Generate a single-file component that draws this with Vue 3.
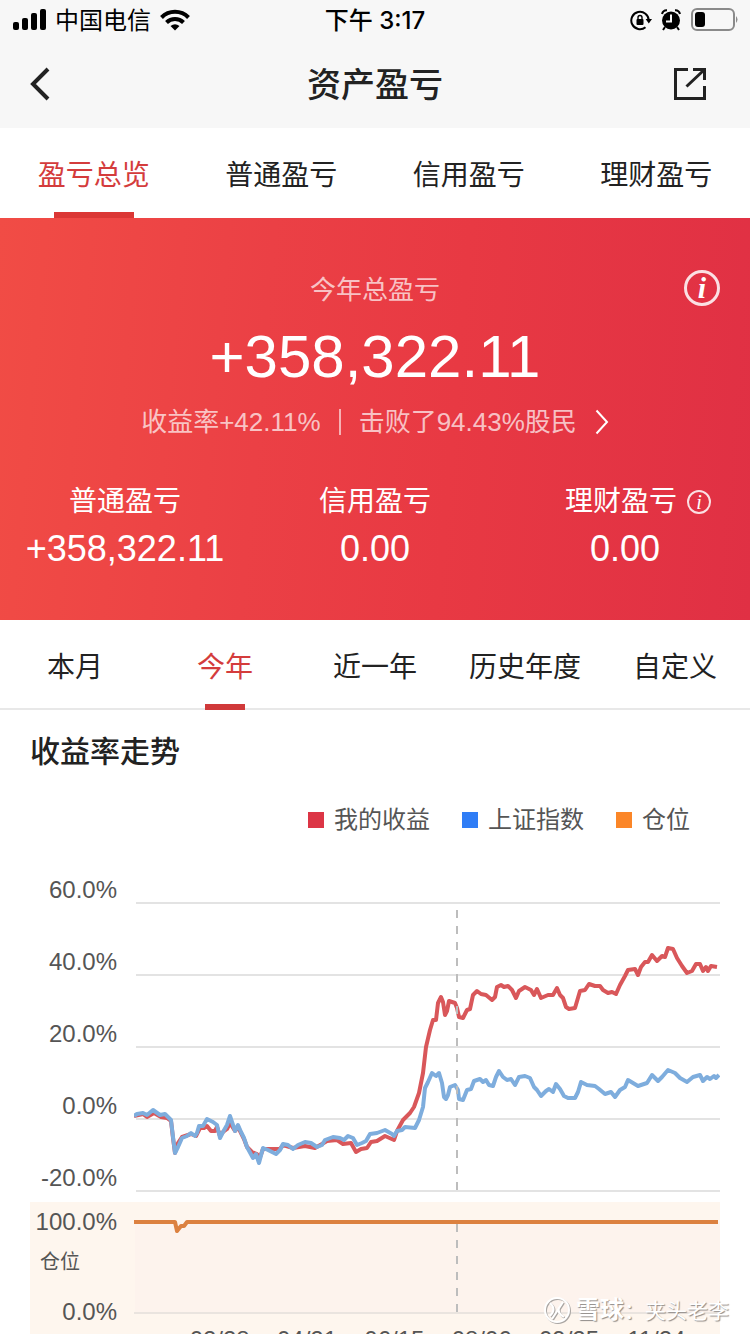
<script setup>
import { ref } from 'vue';

const tabs = ['盈亏总览', '普通盈亏', '信用盈亏', '理财盈亏'];
const activeTab = ref('盈亏总览');

const periods = ['本月', '今年', '近一年', '历史年度', '自定义'];
const activePeriod = ref('今年');

const metrics = [
    { label: '普通盈亏', value: '+358,322.11' },
    { label: '信用盈亏', value: '0.00' },
    { label: '理财盈亏', value: '0.00', info: true },
];

const legend = [
    { name: '我的收益', key: 'mine' },
    { name: '上证指数', key: 'index' },
    { name: '仓位', key: 'position' },
];

const yLabels = ['60.0%', '40.0%', '20.0%', '0.0%', '-20.0%'];
const gridLines = [25, 97, 169, 241, 313];
const dates = ['02/28', '04/21', '06/15', '08/06', '09/25', '11/24'];

const mine = '0,238 9,236 13,239 20,235 27,239 33,240 37,243 39,260 41,275 44,265 48,259 57,256 62,258 66,250 70,250 73,248 77,253 81,253 83,249 86,258 89,254 93,251 96,245 101,253 104,249 107,255 110,261 113,269 118,274 123,276 125,282 129,271 139,271 146,271 149,267 159,270 171,268 181,270 188,266 193,263 203,262 209,266 217,265 222,274 227,271 233,270 237,264 243,263 251,258 260,262 263,253 269,242 276,235 280,229 285,215 289,195 292,169 296,152 299,142 302,142 304,125 307,119 309,124 311,137 313,133 315,123 321,125 323,130 325,139 329,140 333,132 336,131 339,117 343,113 347,116 352,117 358,122 361,119 363,109 367,107 370,109 374,108 378,112 382,120 385,113 391,109 397,112 400,117 403,111 407,120 414,117 419,117 423,110 426,117 429,120 432,129 435,131 441,130 446,113 451,112 455,106 461,108 466,108 469,112 474,115 478,114 482,116 486,107 491,98 494,92 501,91 504,97 507,89 511,84 514,84 518,77 523,83 528,78 531,79 534,70 539,71 543,80 548,88 553,95 558,93 562,86 566,86 569,93 572,89 574,93 577,88 583,89';

const index = '0,238 3,236 9,235 13,237 19,232 26,237 31,236 34,239 37,242 39,259 41,275 44,269 48,260 53,258 57,255 61,258 63,255 65,248 69,248 73,241 79,244 83,247 86,260 89,254 93,247 96,238 101,253 104,247 107,254 110,260 113,269 119,280 122,276 125,285 129,270 134,272 142,276 146,272 149,266 154,267 159,271 164,267 171,264 177,265 183,269 188,267 191,262 199,259 206,260 210,262 214,258 219,260 223,267 228,265 232,263 236,256 243,255 251,252 258,256 260,258 263,253 268,252 271,249 281,250 285,242 289,229 291,210 294,204 298,195 302,198 305,195 308,205 310,219 312,221 314,217 316,209 321,207 324,212 325,221 329,222 333,212 337,211 340,203 346,201 349,204 352,202 355,207 359,208 362,199 365,193 369,199 373,202 377,201 381,207 385,199 391,198 396,200 400,209 403,212 407,218 412,213 415,211 419,214 422,206 426,211 430,218 434,220 441,220 444,214 447,204 453,207 461,208 465,211 471,216 477,214 481,219 486,212 491,209 494,202 499,205 504,208 513,205 518,197 524,203 528,199 534,192 541,195 546,200 553,204 559,199 566,197 569,203 573,199 576,201 580,198 582,200 585,197';

const position = '0,20 41,20 43,29 47,24 50,24 53,20 584,20';
</script>

<template>
    <div class="page">
        <header class="top">
            <div class="status">
                <div class="status-left">
                    <svg width="34" height="22" viewBox="0 0 34 22">
                        <rect x="1" y="13" width="6" height="8" rx="2" />
                        <rect x="10" y="9" width="6" height="12" rx="2" />
                        <rect x="19" y="4" width="6" height="17" rx="2" />
                        <rect x="28" y="0" width="6" height="21" rx="2" />
                    </svg>
                    <span class="carrier">中国电信</span>
                    <svg width="30" height="22" viewBox="0 0 30 22">
                        <path d="M1.500 8.500 A19 19 0 0 1 28.500 8.500" fill="none" stroke="#000" stroke-width="4" />
                        <path d="M6.500 13.500 A12 12 0 0 1 23.500 13.500" fill="none" stroke="#000" stroke-width="4" />
                        <path d="M10.500 17 Q15 13.500 19.500 17 L15 21.500 Z" />
                    </svg>
                </div>
                <div class="time">下午 3:17</div>
                <div class="status-right">
                    <svg width="22" height="22" viewBox="0 0 22 22">
                        <path d="M15.500 18.200 A8.700 8.700 0 1 1 18.700 11.500" fill="none" stroke="#000" stroke-width="2" />
                        <path d="M15.600 10 H22 L18.800 14.500 Z" />
                        <rect x="6.500" y="10" width="7" height="6" rx="1" />
                        <path d="M8 10.500 V8.500 A2 2 0 0 1 12 8.500 V10.500" fill="none" stroke="#000" stroke-width="1.400" />
                    </svg>
                    <svg width="20" height="22" viewBox="0 0 20 22">
                        <circle cx="10" cy="11.500" r="9" />
                        <path d="M1 5 Q2 1 6 1.200 M19 5 Q18 1 14 1.200" fill="none" stroke="#000" stroke-width="2" />
                        <path d="M4 18 L2 21 M16 18 L18 21" stroke="#000" stroke-width="2" />
                        <path d="M10 5.500 V12.500 H5" fill="none" stroke="#f7f7f7" stroke-width="2" />
                    </svg>
                    <svg width="48" height="24" viewBox="0 0 48 24">
                        <rect x="2" y="1" width="42" height="21" rx="5" fill="none" stroke="#8a8a8a" stroke-width="2" />
                        <rect x="5" y="4" width="10" height="15" rx="3" />
                        <path d="M46 8 Q49 11.500 46 15 Z" fill="#8a8a8a" />
                    </svg>
                </div>
            </div>
            <div class="nav">
                <button class="icon-btn" aria-label="返回">
                    <svg width="20" height="34" viewBox="0 0 20 34">
                        <path d="M18 2 L3 17 L18 32" fill="none" stroke="#222" stroke-width="4" />
                    </svg>
                </button>
                <h1>资产盈亏</h1>
                <button class="icon-btn share" aria-label="分享">
                    <svg width="34" height="34" viewBox="0 0 34 34">
                        <path d="M15 2.500 H2.500 V31.500 H31.500 V19" fill="none" stroke="#222" stroke-width="3" />
                        <path d="M20 2.500 H31.500 V13 M31 3 L13.500 19.500" fill="none" stroke="#222" stroke-width="3" />
                    </svg>
                </button>
            </div>
        </header>

        <nav class="tabs">
            <button
                v-for="tab in tabs"
                :key="tab"
                class="tab"
                :class="{ active: tab === activeTab }"
                @click="activeTab = tab"
            >
                <span>{{ tab }}</span>
            </button>
        </nav>

        <section class="banner">
            <div class="banner-head">
                <span class="banner-label">今年总盈亏</span>
                <button class="info big" aria-label="说明">i</button>
            </div>
            <div class="total">+358,322.11</div>
            <a class="rate" href="#">
                <span>收益率+42.11%</span>
                <i class="bar"></i>
                <span>击败了94.43%股民</span>
                <svg width="14" height="26" viewBox="0 0 14 26">
                    <path d="M1.500 1.500 L12 13 L1.500 24.500" fill="none" stroke="#fff" stroke-width="2" />
                </svg>
            </a>
            <div class="metrics">
                <div v-for="m in metrics" :key="m.label" class="metric">
                    <div class="metric-label" :class="{ 'has-info': m.info }">
                        <span>{{ m.label }}</span>
                        <button v-if="m.info" class="info" aria-label="理财盈亏说明">i</button>
                    </div>
                    <div class="metric-value">{{ m.value }}</div>
                </div>
            </div>
        </section>

        <nav class="tabs periods">
            <button
                v-for="p in periods"
                :key="p"
                class="tab"
                :class="{ active: p === activePeriod }"
                @click="activePeriod = p"
            >
                <span>{{ p }}</span>
            </button>
        </nav>

        <section class="trend">
            <h2>收益率走势</h2>
            <div class="legend">
                <div v-for="item in legend" :key="item.key" class="legend-item">
                    <i :class="item.key"></i>
                    <span>{{ item.name }}</span>
                </div>
            </div>

            <div class="chart">
                <div class="y-axis">
                    <span v-for="y in yLabels" :key="y">{{ y }}</span>
                </div>
                <svg class="plot" viewBox="0 0 586 324" preserveAspectRatio="none">
                    <line v-for="y in gridLines" :key="y" class="grid" x1="2" x2="586" :y1="y" :y2="y" />
                    <polyline class="line red" :points="mine" />
                    <polyline class="line blue" :points="index" />
                    <line class="cursor" x1="323" x2="323" y1="32" y2="312" />
                </svg>
            </div>

            <div class="position-chart">
                <div class="position-axis">
                    <span>100.0%</span>
                    <span class="position-name">仓位</span>
                    <span>0.0%</span>
                </div>
                <div class="position-body">
                    <svg class="position-plot" viewBox="0 0 586 120" preserveAspectRatio="none">
                        <rect x="1" y="20" width="585" height="91" fill="#fdf3ed" />
                        <line class="grid" x1="0" x2="586" y1="111" y2="111" />
                        <line class="cursor" x1="323" x2="323" y1="22" y2="111" />
                        <polyline class="line orange" :points="position" />
                    </svg>
                    <div class="dates">
                        <span v-for="d in dates" :key="d">{{ d }}</span>
                    </div>
                </div>
            </div>
        </section>

        <div class="watermark">
            <svg width="28" height="28" viewBox="0 0 28 28">
                <g fill="none" stroke="#a9a5a2" stroke-width="2" transform="translate(1 1)">
                    <circle cx="13" cy="13" r="12" />
                    <path d="M6 6 Q13 12 6 19 M19 5 L8 22 M20 20 Q13 16 15 11" />
                </g>
                <g fill="none" stroke="#fff" stroke-width="2">
                    <circle cx="13" cy="13" r="12" />
                    <path d="M6 6 Q13 12 6 19 M19 5 L8 22 M20 20 Q13 16 15 11" />
                </g>
            </svg>
            <span><b>雪球</b>：夹头老李</span>
        </div>
    </div>
</template>

<style>
body {
    margin: 0;
    background: #fff;
}
</style>

<style scoped>
.page {
    position: relative;
    height: 100vh;
    overflow: hidden;
    background: #fff;
    color: #222;
    font-family: "Liberation Sans", "Noto Sans CJK SC", sans-serif;
}

button {
    padding: 0;
    border: none;
    background: none;
    color: inherit;
    font: inherit;
    cursor: pointer;
}

svg {
    display: block;
    flex-shrink: 0;
}

.top {
    background: #f7f7f7;
}

.status {
    display: grid;
    grid-template-columns: 1fr auto 1fr;
    align-items: center;
    height: 40px;
    padding: 0 12px;
    color: #000;
    font-size: 24px;
}

.status-left,
.status-right {
    display: flex;
    align-items: center;
    gap: 9px;
}

.status-right {
    justify-content: flex-end;
}

.carrier,
.time {
    padding-bottom: 3px;
}

.time {
    font-family: Inter, "Noto Sans CJK SC", sans-serif;
    font-weight: 500;
}

.nav {
    display: grid;
    grid-template-columns: 1fr auto 1fr;
    align-items: center;
    height: 88px;
    padding: 0 43px 0 30px;
}

.icon-btn {
    justify-self: start;
}

.icon-btn.share {
    justify-self: end;
}

.nav h1 {
    margin: 0 0 0 13px;
    padding-bottom: 4px;
    font-size: 34px;
    font-weight: 500;
}

.tabs {
    display: flex;
    height: 90px;
}

.tab {
    display: flex;
    flex: 1;
    flex-direction: column;
    align-items: center;
    font-size: 28px;
}

.tab span {
    padding-top: 12px;
    line-height: 72px;
}

.tab.active {
    color: #d43c3c;
}

.tab.active::after {
    content: "";
    width: 80px;
    height: 6px;
    background: #db3735;
}

.periods {
    box-shadow: inset 0 -2px #e8e8e8;
}

.periods .tab.active::after {
    width: 40px;
    background: #d0393a;
}

.banner {
    height: 402px;
    background: linear-gradient(95deg, #f14c45 0%, #eb4045 35%, #e83943 60%, #e03044 100%);
    color: #fff;
}

.banner-head {
    display: grid;
    grid-template-columns: 1fr auto 1fr;
    align-items: center;
    padding: 51px 30px 0;
    height: 36px;
}

.banner-label {
    grid-column: 2;
    color: rgba(255, 255, 255, 0.7);
    font-size: 26px;
}

.info {
    width: 24px;
    height: 24px;
    box-sizing: border-box;
    border: 2px solid rgba(255, 255, 255, 0.85);
    border-radius: 50%;
    color: #fff;
    font: italic 20px/19px "Liberation Serif", serif;
    text-align: center;
}

.info.big {
    justify-self: end;
    width: 36px;
    height: 36px;
    border-width: 3px;
    font-size: 30px;
    font-weight: bold;
    line-height: 28px;
}

.total {
    margin-top: 20px;
    font-size: 60px;
    line-height: 64px;
    text-align: center;
}

.rate {
    display: flex;
    justify-content: center;
    align-items: center;
    gap: 18px;
    margin-top: 17px;
    color: rgba(255, 255, 255, 0.7);
    font-size: 26px;
    line-height: 32px;
    text-decoration: none;
}

.bar {
    width: 2px;
    height: 26px;
    background: rgba(255, 255, 255, 0.6);
}

.metrics {
    display: flex;
    margin-top: 44px;
}

.metric {
    flex: 1;
    text-align: center;
}

.metric-label {
    display: flex;
    justify-content: center;
    align-items: center;
    gap: 10px;
    font-size: 28px;
    line-height: 40px;
}

.metric-label.has-info {
    padding-left: 26px;
}

.metric-value {
    margin-top: 5px;
    font-size: 36px;
    line-height: 44px;
}

.trend h2 {
    margin: 21px 30px 0;
    font-size: 30px;
    font-weight: 500;
    line-height: 42px;
}

.legend {
    display: flex;
    justify-content: flex-end;
    gap: 32px;
    margin: 31px 60px 0 0;
    color: #555;
    font-size: 24px;
    line-height: 32px;
}

.legend-item {
    display: flex;
    align-items: center;
    gap: 10px;
}

.legend-item i {
    width: 16px;
    height: 16px;
}

.legend-item .mine {
    background: #dc3545;
}

.legend-item .index {
    background: #2f7df6;
}

.legend-item .position {
    background: #fb8628;
}

.chart {
    display: flex;
    gap: 17px;
    margin: 42px 30px 0 0;
}

.y-axis {
    display: flex;
    flex-direction: column;
    gap: 48px;
    width: 117px;
    color: #555;
    font-size: 24px;
    line-height: 24px;
    text-align: right;
}

.plot {
    flex: 1;
    width: 0;
    height: 324px;
}

.grid {
    stroke: #e3e3e3;
    stroke-width: 2;
}

.cursor {
    stroke: #bdbdbd;
    stroke-width: 2;
    stroke-dasharray: 8 8;
}

.line {
    fill: none;
    stroke-width: 4;
    stroke-linejoin: round;
    vector-effect: non-scaling-stroke;
}

.red {
    stroke: #d9575a;
}

.blue {
    stroke: #7eaddd;
}

.orange {
    stroke: #dc8140;
}

.position-chart {
    display: flex;
    gap: 17px;
    margin: 0 30px;
    background: #fef6ee;
}

.position-axis {
    display: flex;
    flex-direction: column;
    width: 87px;
    padding-top: 8px;
    color: #555;
    font-size: 24px;
    line-height: 24px;
    text-align: right;
}

.position-axis .position-name {
    margin: 16px 0 26px;
    padding-left: 10px;
    font-size: 20px;
    text-align: left;
}

.position-body {
    flex: 1;
}

.position-plot {
    width: 100%;
    height: 120px;
}

.position-plot .grid {
    stroke: #eae4df;
}

.dates {
    display: grid;
    grid-template-columns: repeat(6, 1fr);
    padding: 6px 20px 0 42px;
    color: #555;
    font-size: 24px;
    line-height: 24px;
    text-align: center;
}

.watermark {
    position: absolute;
    right: 21px;
    bottom: 8px;
    display: flex;
    align-items: center;
    gap: 4px;
    color: #fff;
    font-size: 21px;
    line-height: 30px;
    text-shadow: 1px 1px 1px #8f8b88;
}

.watermark b {
    font-size: 24px;
}
</style>
